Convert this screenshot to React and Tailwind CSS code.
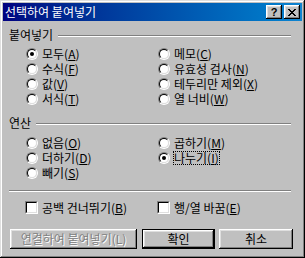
import React from "react";

function Radio({ checked }) {
  return (
    <span className="inline-block w-[12px] h-[12px] shrink-0 rounded-full border border-t-[#808080] border-l-[#808080] border-b-white border-r-white">
      <span className="flex w-full h-full items-center justify-center rounded-full border border-t-black border-l-black border-b-[#dfdfdf] border-r-[#dfdfdf] bg-white">
        {checked && <span className="block w-[4px] h-[4px] rounded-full bg-black" />}
      </span>
    </span>
  );
}

function Check() {
  return (
    <span className="inline-block w-[13px] h-[13px] shrink-0 border border-t-[#808080] border-l-[#808080] border-b-white border-r-white">
      <span className="block w-full h-full border border-t-black border-l-black border-b-[#dfdfdf] border-r-[#dfdfdf] bg-white" />
    </span>
  );
}

function RadioRow({ checked, children, focus }) {
  return (
    <div className="flex items-center h-[15px] gap-[4px]">
      <Radio checked={checked} />
      {focus ? (
        <span className="border border-dotted border-black -mx-[1px] leading-[12px]">{children}</span>
      ) : (
        <span className="leading-[15px]">{children}</span>
      )}
    </div>
  );
}

function Etch({ className }) {
  return <div className={"h-[2px] border-t border-t-[#808080] border-b border-b-white " + className} />;
}

const raised =
  "shadow-[inset_-1px_-1px_#000,inset_1px_1px_#fff,inset_-2px_-2px_#808080,inset_2px_2px_#dfdfdf]";

export default function App() {
  return (
    <div className="w-[305px] h-[258px] bg-[#c0c0c0] p-[3px] shadow-[inset_-1px_-1px_#000,inset_1px_1px_#dfdfdf,inset_-2px_-2px_#808080,inset_2px_2px_#fff] font-['Noto_Sans_CJK_KR','Noto_Sans',sans-serif] text-[12px] text-black">
      {/* title bar */}
      <div className="h-[18px] flex items-center justify-between bg-linear-to-r from-[#000080] to-[#1084d0] pl-[2px] pr-[2px]">
        <span className="text-white text-[12px] leading-[18px]">선택하여 붙여넣기</span>
        <div className="flex gap-[2px]">
          <div className={"w-[16px] h-[14px] bg-[#c0c0c0] flex items-center justify-center " + raised}>
            <span className="font-['Liberation_Sans',sans-serif] font-bold text-[11px] leading-[11px]">?</span>
          </div>
          <div className={"w-[16px] h-[14px] bg-[#c0c0c0] flex items-center justify-center " + raised}>
            <svg width="8" height="7" viewBox="0 0 8 7" shapeRendering="crispEdges">
              <path d="M0 0h2v1h-2zM6 0h2v1h-2zM1 1h2v1h-2zM5 1h2v1h-2zM2 2h4v1h-4zM3 3h2v1h-2zM2 4h4v1h-4zM1 5h2v1h-2zM5 5h2v1h-2zM0 6h2v1h-2zM6 6h2v1h-2z" fill="#000" />
            </svg>
          </div>
        </div>
      </div>

      <div className="pl-[6px] pr-[9px]">
        {/* 붙여넣기 group */}
        <div className="mt-[7px] flex items-center h-[13px]">
          <span className="leading-[13px]">붙여넣기</span>
          <Etch className="flex-1 ml-[5px] mr-[2px] mt-[2px]" />
        </div>
        <div className="mt-[5px] pl-[17px] grid grid-cols-[132px_1fr]">
          <RadioRow checked>모두(<u>A</u>)</RadioRow>
          <RadioRow>메모(<u>C</u>)</RadioRow>
          <RadioRow>수식(<u>F</u>)</RadioRow>
          <RadioRow>유효성 검사(<u>N</u>)</RadioRow>
          <RadioRow>값(<u>V</u>)</RadioRow>
          <RadioRow>테두리만 제외(<u>X</u>)</RadioRow>
          <RadioRow>서식(<u>T</u>)</RadioRow>
          <RadioRow>열 너비(<u>W</u>)</RadioRow>
        </div>

        {/* 연산 group */}
        <div className="mt-[10px] flex items-center h-[13px]">
          <span className="leading-[13px]">연산</span>
          <Etch className="flex-1 ml-[5px] mr-[2px] mt-[2px]" />
        </div>
        <div className="mt-[6px] pl-[17px] grid grid-cols-[132px_1fr]">
          <RadioRow>없음(<u>O</u>)</RadioRow>
          <RadioRow>곱하기(<u>M</u>)</RadioRow>
          <RadioRow>더하기(<u>D</u>)</RadioRow>
          <RadioRow checked focus>나누기(<u>I</u>)</RadioRow>
          <RadioRow>빼기(<u>S</u>)</RadioRow>
          <div />
        </div>

        <Etch className="mt-[10px] mr-[2px]" />

        <div className="mt-[8px] pl-[16px] grid grid-cols-[132px_1fr]">
          <div className="flex items-center h-[15px] gap-[4px]">
            <Check />
            <span className="leading-[15px]">공백 건너뛰기(<u>B</u>)</span>
          </div>
          <div className="flex items-center h-[15px] gap-[4px]">
            <Check />
            <span className="leading-[15px]">행/열 바꿈(<u>E</u>)</span>
          </div>
        </div>

        <div className="mt-[14px] ml-[1px] flex">
          <div className={"w-[127px] h-[20px] flex items-center justify-center " + raised}>
            <span className="text-[#808080] [text-shadow:1px_1px_#fff] leading-[14px]">연결하여 붙여넣기(L)</span>
          </div>
          <div className="ml-[5px] w-[73px] h-[20px] border border-black">
            <div className={"w-full h-full flex items-center justify-center " + raised}>
              <span className="leading-[14px]">확인</span>
            </div>
          </div>
          <div className={"ml-[4px] w-[74px] h-[20px] flex items-center justify-center " + raised}>
            <span className="leading-[14px]">취소</span>
          </div>
        </div>
      </div>
    </div>
  );
}
